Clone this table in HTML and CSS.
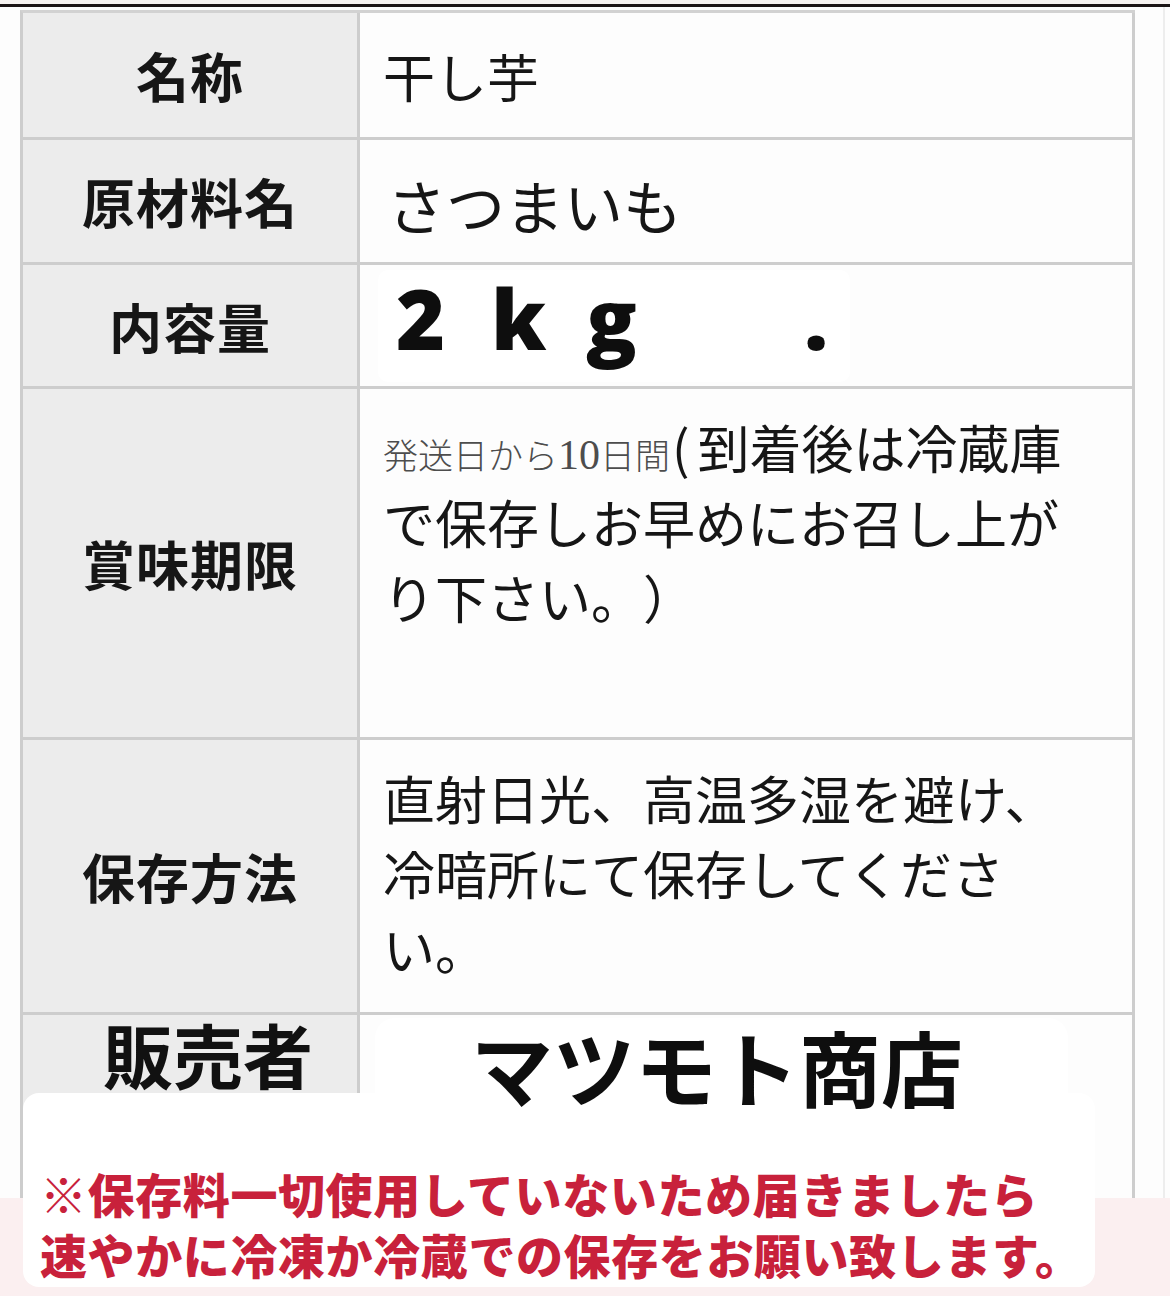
FILE: index.html
```html
<!DOCTYPE html>
<html lang="ja">
<head>
<meta charset="utf-8">
<title>干し芋 商品表示</title>
<link rel="stylesheet" href="styles.css">
</head>
<body>
<div class="topbar"></div>
<div class="sheet">
  <div class="spec">
    <div class="label">名称</div>
    <div class="value">干し芋</div>

    <div class="label">原材料名</div>
    <div class="value value-raw"><span class="raw">さつまいも</span></div>

    <div class="label">内容量</div>
    <div class="value value-qty">
      <div class="qty-box"><span class="ch">2</span><span class="ch">k</span><span class="ch">g</span><span class="dot">.</span></div>
    </div>

    <div class="label">賞味期限</div>
    <div class="value value-multi"><p class="multi"><span class="small">発送日から<span class="num">10</span>日間</span><span class="paren">(</span>到着後は冷蔵庫<br>で保存しお早めにお召し上が<br>り下さい。）</p></div>

    <div class="label">保存方法</div>
    <div class="value value-multi"><p class="multi">直射日光、高温多湿を避け、<br>冷暗所にて保存してくださ<br>い。</p></div>

    <div class="label label-seller">販売者</div>
    <div class="value value-seller"><div class="seller-box">マツモト商店</div></div>
  </div>
  <div class="edge-line"></div>
</div>
<div class="pink-band"></div>
<div class="note">
  <p class="note-text"><span class="note-line">※保存料一切使用していないため届きましたら</span><span class="note-line">速やかに冷凍か冷蔵での保存をお願い致します。</span></p>
</div>
</body>
</html>
```

FILE: styles.css
```css
html, body {
  margin: 0;
  padding: 0;
}
body {
  width: 1170px;
  height: 1296px;
  overflow: hidden;
  position: relative;
  background: #fdfdfd;
  font-family: "Noto Sans CJK JP", "Noto Sans", sans-serif;
  color: #141414;
  text-spacing-trim: space-all;
}
.topbar {
  height: 4px;
  background: #f7f3f1;
  border-bottom: 3px solid #1c1616;
}
.sheet {
  position: relative;
  height: 1191px;
  overflow: hidden;
  padding: 3px 0 0 20px;
  box-sizing: border-box;
}
.edge-line {
  position: absolute;
  top: 0;
  bottom: 0;
  left: 1163px;
  width: 2px;
  background: #ededed;
}
.spec {
  display: grid;
  grid-template-columns: 337px 775px;
  grid-template-rows: 127px 125px 124px 351px 275px 220px;
  width: 1115px;
  border-left: 3px solid #cdcdcd;
  border-top: 3px solid #d2d2d2;
  box-sizing: border-box;
}
.label, .value {
  box-sizing: border-box;
  border-right: 3px solid #cdcdcd;
  border-bottom: 3px solid #cdcdcd;
}
.label {
  background: #ececec;
  display: flex;
  align-items: center;
  justify-content: center;
  font-size: 53px;
  font-weight: 700;
  letter-spacing: 1px;
  color: #161616;
}
.value {
  background: #fdfdfd;
  display: flex;
  align-items: center;
  padding-left: 23px;
  font-size: 52px;
  font-weight: 400;
  color: #161616;
  white-space: nowrap;
}
.value-raw {
  padding-top: 6px;
}
.raw {
  font-size: 59px;
  margin-left: 4px;
}
.value-qty {
  padding-left: 18px;
}
.qty-box {
  background: #ffffff;
  border-radius: 10px;
  width: 472px;
  height: 112px;
  box-sizing: border-box;
  padding: 0 0 16px 18px;
  line-height: 96px;
  font-family: "Open Sans", "Noto Sans", sans-serif;
  font-weight: 800;
  font-size: 84px;
  color: #0e0e0e;
}
.ch {
  display: inline-block;
  width: 95px;
}
.dot {
  display: inline-block;
  margin-left: 123px;
}
.value-multi {
  align-items: flex-start;
  padding-top: 20px;
}
.multi {
  margin: 0;
  line-height: 75px;
  font-size: 52px;
}
.small {
  font-size: 35px;
  line-height: 1;
  color: #4d4d4d;
  font-weight: 300;
}
.num {
  font-family: "Liberation Serif", serif;
  font-size: 42px;
  line-height: 1;
}
.paren {
  padding: 0 8px 0 2px;
}
.label-seller {
  align-items: flex-start;
  justify-content: flex-start;
  padding: 4px 0 0 80px;
  font-size: 70px;
  line-height: 1;
  letter-spacing: 0;
  color: #111111;
}
.value-seller {
  align-items: flex-start;
  padding: 3px 0 0 15px;
}
.seller-box {
  position: relative;
  z-index: 2;
  background: #ffffff;
  border-radius: 20px;
  width: 693px;
  height: 104px;
  box-sizing: border-box;
  padding: 7px 0 0 96px;
  font-size: 82px;
  font-weight: 700;
  line-height: 1;
  color: #0e0e0e;
}
.pink-band {
  height: 98px;
  background: #fbeff0;
}
.note {
  position: absolute;
  z-index: 1;
  top: 1093px;
  left: 23px;
  width: 1072px;
  height: 194px;
  background: #ffffff;
  border-radius: 16px;
  box-sizing: border-box;
  padding: 72px 0 0 17px;
}
.note-text {
  margin: 0;
  display: flex;
  flex-direction: column;
  gap: 6px;
  font-size: 47px;
  font-weight: 900;
  color: #c8213b;
  white-space: nowrap;
}
.note-line {
  display: block;
  height: 55px;
  line-height: 55px;
  letter-spacing: 0.6px;
}
```
